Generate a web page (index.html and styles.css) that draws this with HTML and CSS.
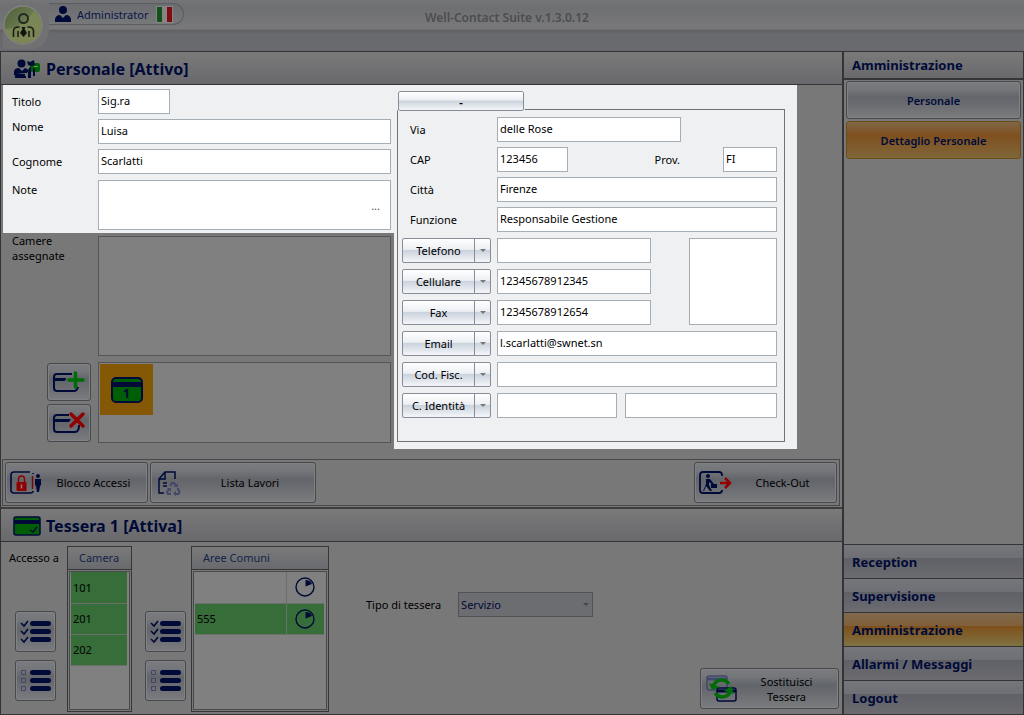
FILE: index.html
```html
<!DOCTYPE html>
<html lang="it">
<head>
<meta charset="utf-8">
<title>Well-Contact Suite</title>
<link rel="stylesheet" href="styles.css">
</head>
<body>
<svg class="defs" aria-hidden="true">
  <symbol id="checks" viewBox="0 0 32 24"><path d="M1 3l3 3 4-5M1 11l3 3 4-5M1 19l3 3 4-5" fill="none" stroke="#000a38" stroke-width="1.6"/><path d="M12.500 3.500h16M12.500 11.500h16M12.500 19.500h16" stroke="#000a38" stroke-width="5" stroke-linecap="round"/></symbol>
  <symbol id="boxes" viewBox="0 0 32 24"><path d="M1.500 1.500h4v4h-4zM1.500 9.500h4v4h-4zM1.500 17.500h4v4h-4z" fill="none" stroke="#42466a"/><path d="M12.500 3.500h16M12.500 11.500h16M12.500 19.500h16" stroke="#000a38" stroke-width="5" stroke-linecap="round"/></symbol>
  <symbol id="clock" viewBox="0 0 20 20"><circle cx="10" cy="10" r="9" fill="none" stroke="#000a38" stroke-width="1.400"/><path d="M10.500 9.500V3q5 0 6.500 4z" fill="#000a38"/></symbol>
</svg>
<div class="app">
  <header class="top">
    <div class="user">
      <svg class="orb" width="46" height="46" viewBox="0 0 46 46">
        <defs><linearGradient id="g" x1="0" y1="0" x2="1" y2="1"><stop offset="0" stop-color="#4c5f3a"/><stop offset=".5" stop-color="#6c7b4f"/><stop offset="1" stop-color="#6b7747"/></linearGradient></defs>
        <path d="M0 0h39q7 7 7 22v6q-2 14-14 18H0z" fill="#717173"/>
        <circle cx="20" cy="22" r="19" fill="url(#g)" stroke="#808180" stroke-width="1.500"/>
        <path d="M2 26Q20 25 31 8Q39 15 38 24Q36 40 20 40Q5 40 2 26z" fill="#818b58" opacity=".7"/>
        <circle cx="20.500" cy="15.500" r="4.500" fill="none" stroke="#242824" stroke-width="2"/>
        <path d="M10.500 34v-6q0-4 5-4h1M30.500 34v-6q0-4-5-4h-1M15 34v-6M26 34v-6" fill="none" stroke="#1a1e18" stroke-width="1.600"/>
        <path d="M18.500 24h4l-1 2 2.500 4-3.500 4-3.500-4 2.500-4z" fill="#101410"/>
      </svg>
      <div class="pill">
        <svg width="16" height="16" viewBox="0 0 16 16"><circle cx="8" cy="4" r="4" fill="#000a38"/><path d="M0 16v-3q1-4 5-4l3 3 3-3q4 0 5 4v3z" fill="#000a38"/></svg>
        <span>Administrator</span>
        <svg width="17" height="17" viewBox="0 0 17 17"><path d="M0 0h17v17H0z" fill="#858585"/><path d="M1 1h5v15H1z" fill="#14501c"/><path d="M11 1h5v15h-5z" fill="#800c12"/></svg>
      </div>
    </div>
    <h1>Well-Contact Suite v.1.3.0.12</h1>
  </header>
  <div class="columns">
    <main class="main">
      <h2 class="bar">
        <svg width="28" height="20" viewBox="0 0 28 20"><rect x="17" y="4" width="10" height="9" rx="2" fill="#005f06"/><path d="M21 7.500h4" stroke="#62a060"/><circle cx="8.500" cy="4.500" r="4" fill="#000a38"/><path d="M1 12q1-3 5-3l3 3 3-3 4 2-2 3H4l8 1v3H4l-3-2zM2 17h11v2H2z" fill="#000a38"/><path d="M14 2l3 1 4-2 1 5-4 1-3-1zM16 9l2-1v11h-3v-6zM20 9v8h2v-7z" fill="#000a38"/></svg>
        <span>Personale [Attivo]</span>
      </h2>
      <div class="detail">
        <div class="left">
          <form class="person">
            <label for="titolo">Titolo</label><input id="titolo" class="short" value="Sig.ra">
            <label for="nome" class="high">Nome</label><input id="nome" value="Luisa">
            <label for="cognome">Cognome</label><input id="cognome" value="Scarlatti">
            <label for="note" class="high low">Note</label>
            <div class="notes"><textarea id="note"></textarea><button type="button" class="more" aria-label="Altro">...</button></div>
          </form>
          <div class="rooms">
            <label for="camere">Camere assegnate</label><textarea id="camere" readonly></textarea>
            <div class="cardbtns">
              <button class="btn square" aria-label="Aggiungi tessera"><svg width="34" height="26" viewBox="0 0 34 26"><path d="M20 5H5Q2 5 2 8v11q0 3 3 3h17q3 0 4-4M2 10h12" fill="none" stroke="#000a38" stroke-width="2"/><path d="M2 9h11v3H2z" fill="#000a38"/><path d="M23.500 4v14M17 11h14" stroke="#006c08" stroke-width="3.500" stroke-linecap="round"/></svg></button>
              <button class="btn square" aria-label="Rimuovi tessera"><svg width="34" height="26" viewBox="0 0 34 26"><path d="M17 5H5Q2 5 2 8v11q0 3 3 3h18q4 0 4-7" fill="none" stroke="#000a38" stroke-width="2"/><path d="M2 9h17l-2 3H2z" fill="#000a38"/><path d="M19 4l12 12M31 4L19 16" stroke="#900000" stroke-width="3.500" stroke-linecap="round"/></svg></button>
            </div>
            <div class="cards">
              <button class="card" aria-label="Tessera 1"><svg width="32" height="26" viewBox="0 0 32 26"><rect x="1" y="1" width="30" height="24" rx="4" fill="#005f06" stroke="#000a38" stroke-width="2"/><path d="M1 5h30v5H1z" fill="#000a38"/></svg><span>1</span></button>
            </div>
          </div>
        </div>
        <form class="right">
          <div class="contact">
            <button type="button" class="lite tab">-</button>
            <div class="address">
              <label for="via">Via</label><input id="via" class="via" value="delle Rose">
              <label for="cap">CAP</label>
              <div class="cap"><input id="cap" value="123456"><label for="prov">Prov.</label><input id="prov" value="FI"></div>
              <label for="citta">Città</label><input id="citta" value="Firenze">
              <label for="funzione">Funzione</label><input id="funzione" value="Responsabile Gestione">
            </div>
            <div class="phones">
              <div class="rows">
                <div class="row"><div class="split"><button type="button" class="lite">Telefono</button><button type="button" class="lite arrow" aria-label="Opzioni Telefono"><i></i></button></div><input aria-label="Telefono"></div>
                <div class="row"><div class="split"><button type="button" class="lite">Cellulare</button><button type="button" class="lite arrow" aria-label="Opzioni Cellulare"><i></i></button></div><input aria-label="Cellulare" value="12345678912345"></div>
                <div class="row"><div class="split"><button type="button" class="lite">Fax</button><button type="button" class="lite arrow" aria-label="Opzioni Fax"><i></i></button></div><input aria-label="Fax" value="12345678912654"></div>
              </div>
              <div class="photo"></div>
            </div>
            <div class="rows">
              <div class="row"><div class="split"><button type="button" class="lite">Email</button><button type="button" class="lite arrow" aria-label="Opzioni Email"><i></i></button></div><input aria-label="Email" value="l.scarlatti@swnet.sn"></div>
              <div class="row"><div class="split"><button type="button" class="lite">Cod. Fisc.</button><button type="button" class="lite arrow" aria-label="Opzioni Codice Fiscale"><i></i></button></div><input aria-label="Codice Fiscale"></div>
              <div class="row"><div class="split"><button type="button" class="lite">C. Identità</button><button type="button" class="lite arrow" aria-label="Opzioni Carta di Identità"><i></i></button></div><div class="pair"><input aria-label="Carta di Identità"><input aria-label="Rilasciata da"></div></div>
            </div>
          </div>
        </form>
      </div>
      <div class="tools">
        <button class="btn w1"><svg width="34" height="24" viewBox="0 0 34 24"><path d="M20 1H4Q1 1 1 4v15q0 3 3 3h16q3 0 3-2M23 3v-1" fill="none" stroke="#000a38" stroke-width="1.600"/><path d="M22.500 5v13" stroke="#800000" stroke-width="1.400"/><rect x="6.500" y="11" width="10" height="9" rx="1" fill="#900000"/><path d="M8.500 11V8q0-3 3-3t3 3v3" fill="none" stroke="#900000" stroke-width="1.400"/><path d="M11.500 13.500v4" stroke="#888" stroke-width="1.500"/><circle cx="28" cy="5" r="2" fill="#000a38"/><path d="M25 8h6v6l-1 1-1 6h-2l-1-6-1-1z" fill="#000a38"/></svg><span>Blocco Accessi</span></button>
        <button class="btn w2"><svg width="24" height="26" viewBox="0 0 24 26"><path d="M18 9V2H8L2 9v14h5M8 2v7H2M6 13h4M6 16h4" fill="none" stroke="#000a38" stroke-width="1.500"/><path d="M13 16l2-3h2l2 3M20.500 18l2 4-1 2H18M14 24h-3l-1-2 2-3" fill="none" stroke="#42486a" stroke-width="2"/><path d="M17 17h4v-4zM19 21v5l-3-2.500zM10 18h4v4z" fill="#42486a"/></svg><span>Lista Lavori</span></button>
        <button class="btn w1 end"><svg width="34" height="24" viewBox="0 0 34 24"><path d="M23 5V4q0-3-3-3H4Q1 1 1 4v15q0 3 3 3h16q3 0 3-3" fill="none" stroke="#000a38" stroke-width="1.800"/><circle cx="9" cy="5" r="2" fill="#000a38"/><path d="M7 8h4l4 5-1 1-4-3v3l3 6h-2l-4-5-2 5H4l3-7z" fill="#000a38"/><rect x="12" y="13" width="6" height="4" fill="#000a38"/><path d="M21 12h9M26 7l5 5-5 5" fill="none" stroke="#900000" stroke-width="2.500"/></svg><span>Check-Out</span></button>
      </div>
      <h2 class="bar second">
        <svg width="28" height="20" viewBox="0 0 28 20"><rect x="1" y="1" width="26" height="18" rx="2" fill="#005f06" stroke="#000a38" stroke-width="1.500"/><path d="M1 4h26v4H1z" fill="#000a38"/><path d="M17 14l3 2 4-5" fill="none" stroke="#000a38" stroke-width="1.500"/></svg>
        <span>Tessera 1 [Attiva]</span>
      </h2>
      <section class="access">
        <div class="side"><span>Accesso a</span>
          <div class="stack"><button class="btn" aria-label="Seleziona tutte le camere"><svg width="32" height="24"><use href="#checks"/></svg></button><button class="btn" aria-label="Deseleziona tutte le camere"><svg width="32" height="24"><use href="#boxes"/></svg></button></div>
        </div>
        <div class="list camera"><h3>Camera</h3><div class="frame"><table><tr class="on"><td>101</td></tr><tr class="on"><td>201</td></tr><tr class="on"><td>202</td></tr></table></div></div>
        <div class="side two">
          <div class="stack"><button class="btn" aria-label="Seleziona tutte le aree"><svg width="32" height="24"><use href="#checks"/></svg></button><button class="btn" aria-label="Deseleziona tutte le aree"><svg width="32" height="24"><use href="#boxes"/></svg></button></div>
        </div>
        <div class="list aree"><h3>Aree Comuni</h3><div class="frame"><table><tr><td></td><td class="time"><svg width="20" height="20"><use href="#clock"/></svg></td></tr><tr class="on"><td>555</td><td class="time"><svg width="20" height="20"><use href="#clock"/></svg></td></tr></table></div></div>
        <div class="type"><label for="tipo">Tipo di tessera</label><div class="drop"><select id="tipo"><option>Servizio</option></select><i></i></div></div>
        <button class="btn w1 swap"><svg width="34" height="30" viewBox="0 0 34 30"><rect x="2" y="2" width="20" height="14" rx="2" fill="none" stroke="#42486a" stroke-width="1.500"/><path d="M2 5h20" stroke="#42486a" stroke-width="3"/><rect x="12" y="14" width="19" height="13" rx="2" fill="none" stroke="#000a38" stroke-width="1.500"/><path d="M12 17h19" stroke="#000a38" stroke-width="3"/><path d="M8 12q3-6 9-6 4 0 7 4M26 17q-3 6-9 6-4 0-7-4" fill="none" stroke="#006c08" stroke-width="3.500"/><path d="M4 9l3 7 8-3zM29 20l-3-8-7 5z" fill="#006c08"/></svg><span>Sostituisci<br>Tessera</span></button>
      </section>
    </main>
    <aside class="sidebar">
      <h2>Amministrazione</h2>
      <div class="menu"><button class="btn">Personale</button><button class="btn active">Dettaglio Personale</button></div>
      <nav><a href="#">Reception</a><a href="#">Supervisione</a><a href="#" class="active">Amministrazione</a><a href="#">Allarmi / Messaggi</a><a href="#">Logout</a></nav>
    </aside>
  </div>
</div>
</body>
</html>
```
FILE: styles.css
```css
* { box-sizing: border-box; }
body { margin: 0; background: #787878; color: #000; font: 11px/15px "Noto Sans", sans-serif; }
button, input, textarea, select { font: inherit; color: inherit; margin: 0; }
h1, h2, h3 { margin: 0; }
svg { display: block; flex: none; }
.defs { position: absolute; width: 0; height: 0; }
.app { min-height: 100vh; display: flex; flex-direction: column; }

.top { height: 51px; display: grid; grid-template-columns: 1fr auto 1fr; align-items: start; background: linear-gradient(#747578 0, #6e6f71 8px, #79797b 29px, #626366 30px, #626366 32px, #696a6e 33px); }
.user { display: flex; align-items: flex-start; padding: 3px 0 0 3px; }
.pill { height: 22px; display: flex; align-items: center; gap: 6px; padding: 0 10px 0 6px; border: 1px solid #5c5d60; border-left: 0; border-radius: 0 11px 11px 0; background: linear-gradient(#6c6d70, #77787a); color: #0a1444; }
.pill span { padding-right: 2px; }
.top h1 { padding: 9px 10px 0 0; color: #4c4d4f; font-size: 12px; font-weight: 600; line-height: 17px; }

.columns { flex: 1; display: flex; border-top: 1px solid #343436; }
.main { flex: 1; min-width: 0; display: flex; flex-direction: column; border-left: 1px solid #343434; border-bottom: 1px solid #343434; }
.bar { display: flex; align-items: center; gap: 5px; height: 33px; padding: 1px 0 0 12px; border-bottom: 1px solid #343436; background: linear-gradient(#7a7a7a, #69696d); color: #000a38; font-size: 16px; line-height: 22px; }
.second { height: 35px; border-top: 2px solid #3e3e3e; }

.detail { flex: 1; display: flex; align-items: flex-start; }
.left { width: 393px; padding-left: 2px; }
.person { display: grid; grid-template-columns: 86px 1fr; row-gap: 5px; align-items: center; padding: 4px 3px 3px 9px; background: #eff0f2; }
input, textarea, .photo { min-width: 0; width: 100%; height: 25px; padding: 0 2px 2px; border: 1px solid #a5adb5; border-radius: 0; background: #fff; outline: 0; }
.short { width: 72px; }
label { padding-bottom: 1px; }
.high { align-self: start; }
.low { padding-top: 3px; }
textarea { display: block; height: 50px; resize: none; }
.notes { position: relative; padding-top: 1px; }
.more { position: absolute; right: 11px; bottom: 17px; padding: 0; border: 0; background: none; color: #555; }
.rooms { display: grid; grid-template-columns: 86px 1fr; row-gap: 6px; padding: 0 3px 0 9px; }
.rooms label { width: 64px; }
.rooms textarea, .cards { height: 120px; border: 1px solid #535557; background: #808080; }
.rooms textarea { margin-top: 3px; }
.cards { height: 81px; padding: 1px; }
.cardbtns { display: grid; gap: 3px; justify-content: end; padding: 1px 7px 0 0; align-content: start; }
.square { width: 44px; height: 38px; }
.card { display: grid; place-items: center; width: 53px; height: 51px; padding: 0; border: 0; background: #855806; color: #000a38; font-weight: bold; }
.card > * { grid-area: 1 / 1; }
.card span { padding-top: 7px; font-size: 13px; }

.right { width: 403px; padding: 24px 12px 7px 3px; background: #eff0f2; }
.contact { position: relative; height: 333px; padding: 7px 7px 0 4px; border: 1px solid #707276; }
.lite { padding: 0; border: 1px solid #878c98; border-radius: 2px; background: linear-gradient(#fff, #eceff3 45%, #cbd3dd 50%, #d3dae3 60%, #f4f6f9); }
.tab { position: absolute; left: 0; top: -19px; width: 126px; height: 20px; font-weight: bold; outline: 1px solid #eff0f2; }
.address { display: grid; grid-template-columns: 87px 1fr; gap: 5px 0; align-items: center; padding-left: 8px; }
.via { width: 184px; }
.cap { display: grid; grid-template-columns: 71px 1fr 54px; align-items: center; }
.cap label { justify-self: end; padding-right: 43px; }
.phones { display: grid; grid-template-columns: 249px 88px; justify-content: space-between; padding: 6px 0; }
.photo { height: auto; }
.rows { display: grid; gap: 6px; }
.row { display: grid; grid-template-columns: 89px 1fr; gap: 6px; }
.split { display: flex; }
.split .lite:first-child { flex: 1; border-radius: 2px 0 0 2px; }
.split .arrow { width: 17px; margin-left: -1px; border-radius: 0 2px 2px 0; display: grid; place-items: center; }
i { border: 3px solid transparent; border-top-color: #77777a; border-bottom-width: 0; }
.pair { display: grid; grid-template-columns: 120px 1fr; gap: 8px; }

.btn { display: flex; align-items: center; justify-content: center; padding: 0; border: 1px solid #48494d; border-radius: 3px; background: linear-gradient(#7b7c7f, #74767a 20%, #62656a 42%, #696b70 60%, #7b7c7e); box-shadow: inset 0 0 0 1px #808184; }
.tools { display: flex; gap: 2px; margin: 0 2px 1px 1px; padding: 2px; border: 1px solid #46484a; }
.w1, .w2 { height: 41px; padding: 0 4px; }
.w1 { width: 143px; }
.w2 { width: 166px; padding-left: 6px; }
.w1 span, .w2 span { flex: 1; text-align: center; }
.w2 span { padding-left: 8px; }
.end { margin-left: auto; }

.access { display: flex; padding: 4px 3px 2px 8px; }
.side { width: 58px; display: flex; flex-direction: column; justify-content: space-between; padding: 4px 0 11px; white-space: nowrap; }
.stack { display: grid; gap: 8px; padding-left: 6px; }
.stack .btn { width: 41px; height: 41px; }
.two { width: 59px; justify-content: flex-end; }
.two .stack { padding-left: 13px; }
.list { height: 166px; display: flex; flex-direction: column; border: 1px solid #353637; }
.camera { width: 65px; }
.aree { width: 138px; }
.list h3 { height: 23px; border-bottom: 1px solid #353637; background: linear-gradient(#7a7a7b, #696a6e); color: #122448; font-size: 11px; font-weight: normal; line-height: 22px; padding-left: 11px; }
.frame { flex: 1; margin: 1px; border: 1px solid #47494b; padding: 0 2px 0 1px; background: #808080; }
table { width: 100%; border-collapse: collapse; }
td { height: 31px; padding: 0 2px; border-bottom: 1px solid #6a716a; }
.on td { background: #366d38; }
.time { width: 38px; border-left: 1px solid #6a716a; }
.time svg { margin: auto; }
.type { display: flex; align-items: center; gap: 17px; height: 25px; margin: 46px 0 0 37px; white-space: nowrap; }
.drop { position: relative; width: 135px; }
.drop select { display: block; appearance: none; width: 100%; height: 25px; padding: 0 2px 1px; border: 1px solid #505256; border-radius: 0; background: #6c6d70; color: #000a38; }
.drop i { position: absolute; right: 4px; top: 11px; border-top-color: #454648; }
.swap { align-self: flex-end; margin: 0 0 3px auto; width: 139px; }

.sidebar { width: 182px; display: flex; flex-direction: column; border: solid #343436; border-width: 0 1px 1px 2px; }
.sidebar h2 { height: 28px; padding-left: 8px; border-bottom: 2px solid #343436; background: linear-gradient(#7a7a7a, #69696d); color: #000a38; font-size: 13px; line-height: 26px; }
.menu { flex: 1; display: flex; flex-direction: column; gap: 2px; padding: 1px 2px; }
.menu .btn { height: 38px; color: #000a38; font-weight: 600; }
.menu .active { border-color: #6b4d18; background: linear-gradient(#806646, #80501e 38%, #7f5628 55%, #806638); box-shadow: none; }
nav a { display: block; height: 34px; padding-left: 8px; border-top: 1px solid #343436; background: linear-gradient(#75767b, #6f7075 38%, #606167 40%, #6b6b70); color: #000a38; font-size: 13px; font-weight: bold; line-height: 34px; text-decoration: none; }
nav .active { background: linear-gradient(#80694e, #80603b 38%, #7f501b 40%, #807242); }
```
